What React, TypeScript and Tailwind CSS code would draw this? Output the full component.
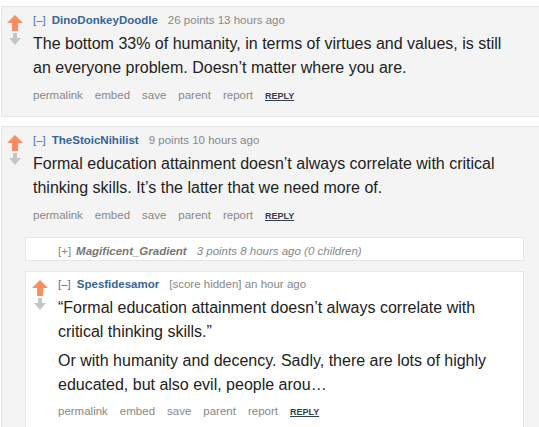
import React from "react";

function Arrows({ top = 2 }: { top?: number }) {
  return (
    <div className={`flex w-[16px] shrink-0 flex-col items-center ${top === 3 ? "mt-[3px]" : "mt-[2px]"}`}>
      <svg width="16" height="16" viewBox="0 0 16 16">
        <path d="M8 0L16 8H11V16H5V8H0Z" fill="#ff8b60" />
      </svg>
      <svg className="mt-[2px]" width="12" height="12" viewBox="0 0 12 12">
        <path d="M4 0H8V5H12L6 12L0 5H4Z" fill="#c6c6c6" />
      </svg>
    </div>
  );
}

function Tagline({ name, meta }: { name: string; meta: string }) {
  return (
    <div className="flex items-baseline whitespace-nowrap text-[11.5px] leading-[15px] text-[#888]">
      <span className="text-[#4a75a8]">[–]</span>
      <span className="ml-[6px] font-bold text-[#336699]">{name}</span>
      <span className="ml-[10px]">{meta}</span>
    </div>
  );
}

function Buttons({ mt = 8 }: { mt?: number }) {
  return (
    <div
      className={`flex items-baseline gap-[12px] whitespace-nowrap text-[11.5px] leading-[15px] text-[#888] ${
        mt === 7 ? "mt-[7px]" : "mt-[8px]"
      }`}
    >
      <span>permalink</span>
      <span>embed</span>
      <span>save</span>
      <span>parent</span>
      <span>report</span>
      <span className="text-[9px] font-bold text-[#333f50] underline">REPLY</span>
    </div>
  );
}

function Body({ paras }: { paras: string[] }) {
  return (
    <div className="mt-[4px] max-w-[485px] text-[16px] leading-[24px] text-[#222]">
      {paras.map((p, i) => (
        <p key={i} className={i > 0 ? "mt-[5px]" : ""}>
          {p}
        </p>
      ))}
    </div>
  );
}

export default function App() {
  return (
    <div className="h-[427px] w-[539px] overflow-hidden bg-white font-['Liberation_Sans',Arial,sans-serif]">
      <div className="w-[580px] pl-[1px] pt-[6px]">
        {/* Comment 1 */}
        <div className="border border-[#e6e6e6] bg-[#f4f4f4] pb-[12px] pl-[5px] pt-[6px]">
          <div className="flex gap-[10px]">
            <Arrows />
            <div className="flex-1">
              <Tagline name="DinoDonkeyDoodle" meta="26 points 13 hours ago" />
              <Body
                paras={[
                  "The bottom 33% of humanity, in terms of virtues and values, is still an everyone problem. Doesn’t matter where you are.",
                ]}
              />
              <Buttons />
            </div>
          </div>
        </div>

        {/* Comment 2 */}
        <div className="mt-[9px] h-[320px] border border-[#e6e6e6] bg-[#f4f4f4] pl-[5px] pt-[6px]">
          <div className="flex gap-[10px]">
            <Arrows />
            <div className="flex-1">
              <Tagline name="TheStoicNihilist" meta="9 points 10 hours ago" />
              <Body
                paras={[
                  "Formal education attainment doesn’t always correlate with critical thinking skills. It’s the latter that we need more of.",
                ]}
              />
              <Buttons />
            </div>
          </div>

          <div className="ml-[18px] mt-[13px] flex w-[499px] flex-col">
            {/* collapsed child */}
            <div className="border border-[#e6e6e6] bg-white pb-[1px] pl-[32px] pt-[6px]">
              <div className="flex items-baseline whitespace-nowrap text-[11.5px] leading-[15px] text-[#888]">
                <span>[+]</span>
                <span className="ml-[5px] font-bold italic text-[#777]">Magificent_Gradient</span>
                <span className="ml-[10px] italic">3 points 8 hours ago (0 children)</span>
              </div>
            </div>

            {/* child 2 */}
            <div className="mt-[10px] h-[200px] border border-[#e6e6e6] bg-white pl-[6px] pr-[20px] pt-[5px]">
              <div className="flex gap-[10px]">
                <Arrows top={3} />
                <div className="flex-1">
                  <Tagline name="Spesfidesamor" meta="[score hidden] an hour ago" />
                  <Body
                    paras={[
                      "“Formal education attainment doesn’t always correlate with critical thinking skills.”",
                      "Or with humanity and decency. Sadly, there are lots of highly educated, but also evil, people arou…",
                    ]}
                  />
                  <Buttons mt={7} />
                </div>
              </div>
            </div>
          </div>
        </div>
      </div>
    </div>
  );
}
